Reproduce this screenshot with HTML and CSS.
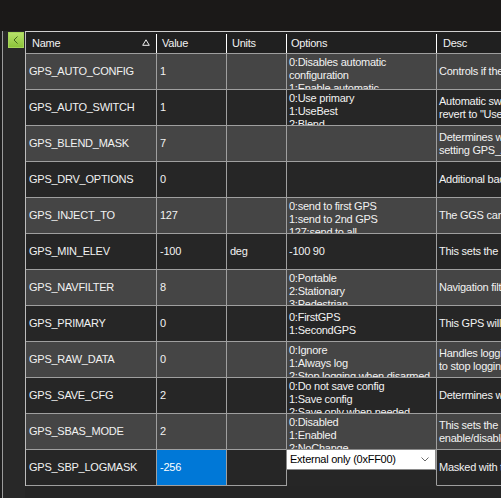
FILE: index.html
```html
<!DOCTYPE html>
<html>
<head>
<meta charset="utf-8">
<link rel="stylesheet" href="styles.css">
</head>
<body>
<div class="topbar"></div>
<div class="main">
  <div class="side">
    <div class="side-inner">
      <div class="collapse-btn">
        <svg width="16" height="16" viewBox="0 0 16 16"><path d="M9.5 4.5 L6 8 L9.5 11.5" fill="none" stroke="#41651a" stroke-width="1"/></svg>
      </div>
    </div>
  </div>
  <div class="gridwrap">
    <div class="grid">
      <div class="hcell hname"><span>Name</span><svg class="sort" width="8" height="7" viewBox="0 0 8 7"><path d="M4 0.8 L7.3 6.3 L0.7 6.3 Z" fill="none" stroke="#f0f0f0" stroke-width="1"/></svg></div>
      <div class="hcell hval">Value</div>
      <div class="hcell hunits">Units</div>
      <div class="hcell hopt">Options</div>
      <div class="hcell hdesc">Desc</div>

      <div class="cell name light">GPS_AUTO_CONFIG</div>
      <div class="cell val light">1</div>
      <div class="cell units light"></div>
      <div class="cell opt top light">0:Disables automatic<br>configuration<br>1:Enable automatic<br>configuration</div>
      <div class="cell desc light">Controls if the autopilot should automatically configure the GPS based on the parameters and default settings</div>

      <div class="cell name dark">GPS_AUTO_SWITCH</div>
      <div class="cell val dark">1</div>
      <div class="cell units dark"></div>
      <div class="cell opt top dark">0:Use primary<br>1:UseBest<br>2:Blend</div>
      <div class="cell desc dark">Automatic switchover to GPS reporting best lock, 1:UseBest selects the GPS with highest status<br>revert to "UseBest" behaviour if 3D fix is lost on primary</div>

      <div class="cell name light">GPS_BLEND_MASK</div>
      <div class="cell val light">7</div>
      <div class="cell units light"></div>
      <div class="cell opt light"></div>
      <div class="cell desc light">Determines which of the accuracy measures Horizontal position, Vertical Position and Speed accuracy are used<br>setting GPS_AUTO_SWITCH to 2</div>

      <div class="cell name dark">GPS_DRV_OPTIONS</div>
      <div class="cell val dark">0</div>
      <div class="cell units dark"></div>
      <div class="cell opt dark"></div>
      <div class="cell desc dark">Additional backend specific options</div>

      <div class="cell name light">GPS_INJECT_TO</div>
      <div class="cell val light">127</div>
      <div class="cell units light"></div>
      <div class="cell opt top light">0:send to first GPS<br>1:send to 2nd GPS<br>127:send to all</div>
      <div class="cell desc light">The GGS can send raw serial packets to inject data to multiple GPSes.</div>

      <div class="cell name dark">GPS_MIN_ELEV</div>
      <div class="cell val dark">-100</div>
      <div class="cell units dark">deg</div>
      <div class="cell opt dark">-100 90</div>
      <div class="cell desc dark">This sets the minimum elevation of satellites above the horizon for them to be used for navigation.</div>

      <div class="cell name light">GPS_NAVFILTER</div>
      <div class="cell val light">8</div>
      <div class="cell units light"></div>
      <div class="cell opt top light">0:Portable<br>2:Stationary<br>3:Pedestrian</div>
      <div class="cell desc light">Navigation filter engine setting</div>

      <div class="cell name dark">GPS_PRIMARY</div>
      <div class="cell val dark">0</div>
      <div class="cell units dark"></div>
      <div class="cell opt dark">0:FirstGPS<br>1:SecondGPS</div>
      <div class="cell desc dark">This GPS will be used when GPS_AUTO_SWITCH is 0 and used preferentially with GPS_AUTO_SWITCH = 4.</div>

      <div class="cell name light">GPS_RAW_DATA</div>
      <div class="cell val light">0</div>
      <div class="cell units light"></div>
      <div class="cell opt top light">0:Ignore<br>1:Always log<br>2:Stop logging when disarmed</div>
      <div class="cell desc light">Handles logging raw data; on uBlox chips that support raw data this will log RXM messages into logger<br>to stop logging after disarming and restart after arming</div>

      <div class="cell name dark">GPS_SAVE_CFG</div>
      <div class="cell val dark">2</div>
      <div class="cell units dark"></div>
      <div class="cell opt top dark">0:Do not save config<br>1:Save config<br>2:Save only when needed</div>
      <div class="cell desc dark">Determines whether the configuration for this GPS should be written to non-volatile memory on the GPS.</div>

      <div class="cell name light">GPS_SBAS_MODE</div>
      <div class="cell val light">2</div>
      <div class="cell units light"></div>
      <div class="cell opt top light">0:Disabled<br>1:Enabled<br>2:NoChange</div>
      <div class="cell desc light">This sets the SBAS (satellite based augmentation system) mode if available on this GPS.<br>enable/disable SBAS. Disabling SBAS may be a good idea in areas where SBAS causes bad performance.</div>

      <div class="cell name dark">GPS_SBP_LOGMASK</div>
      <div class="cell val selected">-256</div>
      <div class="cell units dark"></div>
      <div class="cell opt editing dark">
        <div class="combo"><span>External only (0xFF00)</span><svg width="8" height="5" viewBox="0 0 8 5"><path d="M0.5 0.5 L4 4 L7.5 0.5" fill="none" stroke="#6a6a6a" stroke-width="1"/></svg></div>
      </div>
      <div class="cell desc dark">Masked with the SBP msg_type field to determine whether SBR1/SBP2 data is logged</div>
    </div>
  </div>
</div>
</body>
</html>
```

FILE: styles.css
```css
html, body {
  margin: 0;
  padding: 0;
}
body {
  width: 501px;
  height: 498px;
  overflow: hidden;
  background: #1b1918;
  font-family: "Liberation Sans", Arial, sans-serif;
  font-size: 11px;
  letter-spacing: -0.25px;
  color: #f2f2f2;
}
.topbar {
  height: 31px;
  background: #1b1918;
}
.main {
  display: flex;
  height: 467px;
}
.side {
  width: 25px;
  flex: none;
  box-sizing: border-box;
  padding-left: 2px;
  background: #1e1e1e;
}
.side-inner {
  height: 100%;
  box-sizing: border-box;
  border-left: 1px solid #9c9c9c;
  background: #282828;
  padding-top: 1px;
  padding-left: 5px;
}
.collapse-btn {
  width: 16px;
  height: 16px;
  box-sizing: border-box;
  background: linear-gradient(#b7e26a, #8cc43a);
  border: 1px solid #a6d45a;
  display: flex;
  align-items: center;
  justify-content: center;
}
.collapse-btn svg {
  flex: none;
}
.gridwrap {
  flex: 1;
  overflow: hidden;
  background: #252525;
}
.grid {
  display: grid;
  width: max-content;
  grid-template-columns: 131px 70px 60px 150px 620px;
  grid-auto-rows: 36px;
  grid-template-rows: 22px;
  border-top: 1px solid #cfcfcf;
  border-left: 1px solid #bdbdbd;
}
.hcell {
  position: relative;
  box-sizing: border-box;
  height: 22px;
  background: #202020;
  border-bottom: 1px solid #9f9f9f;
  display: flex;
  align-items: center;
  padding-left: 5px;
}
.hcell::after {
  content: "";
  position: absolute;
  right: 0;
  top: 2px;
  bottom: 0;
  width: 1px;
  background: #ffffff;
}
.hdesc::after {
  display: none;
}
.hname {
  padding-left: 6px;
  padding-right: 7px;
  justify-content: space-between;
}
.hopt {
  padding-left: 4px;
}
.hdesc {
  padding-left: 6px;
}
.sort {
  flex: none;
  margin-top: -1px;
}
.cell {
  box-sizing: border-box;
  height: 36px;
  border-right: 1px solid #9f9f9f;
  border-bottom: 1px solid #9f9f9f;
  overflow: hidden;
  display: flex;
  align-items: center;
  white-space: nowrap;
  line-height: 13px;
  padding-left: 3px;
}
.light {
  background: #454545;
}
.dark {
  background: #262626;
}
.selected {
  background: #0078d7;
  color: #ffffff;
}
.opt, .desc {
  padding-left: 2px;
}
.desc {
  border-right: none;
}
.opt.top {
  align-items: flex-start;
  padding-top: 2px;
}
.opt.editing {
  align-items: flex-start;
  border-bottom-color: transparent;
  padding-left: 0;
  overflow: visible;
}
.combo {
  flex: none;
  box-sizing: border-box;
  width: 150px;
  height: 21px;
  margin-left: -1px;
  margin-top: -1px;
  background: #ffffff;
  border: 1px solid #8a8a8a;
  color: #000000;
  display: flex;
  align-items: center;
  justify-content: space-between;
  padding-left: 3px;
  padding-right: 6px;
}
.combo svg {
  flex: none;
}
```
